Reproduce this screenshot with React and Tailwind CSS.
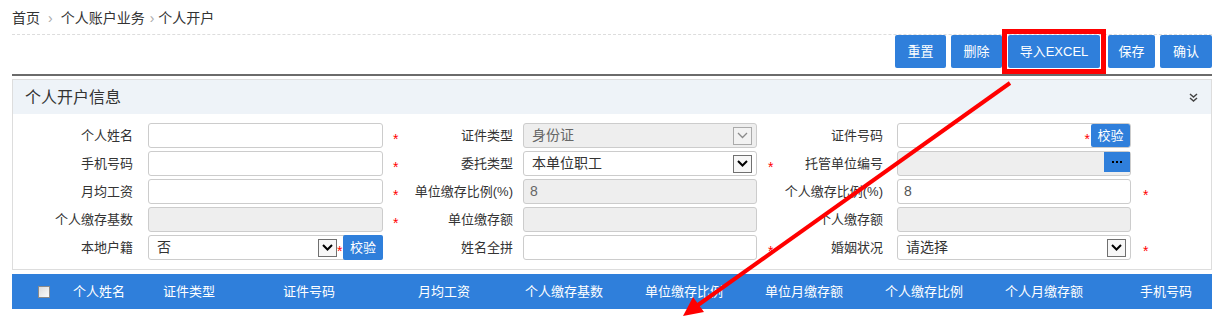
function Star({ className }) {
  return (
    <div className={`flex items-center ${className}`}>
      <span className="translate-y-[3px] text-[14px] leading-none text-[#ff0000]">*</span>
    </div>
  )
}

function Label({ children, className }) {
  return (
    <div className={`flex items-center justify-end whitespace-nowrap text-[13px] ${className}`}>
      {children}
    </div>
  )
}

function Box({ children, disabled, className = '' }) {
  return (
    <div
      className={`flex h-[25px] items-center rounded-[3px] border border-[#cccccc] text-[14px] ${
        disabled ? 'bg-[#eeeeee] text-[#666]' : 'bg-white text-[#333]'
      } ${className}`}
    >
      {children}
    </div>
  )
}

function Arrow({ disabled }) {
  return (
    <div
      className={`flex h-[18px] w-[19px] shrink-0 items-center justify-center border ${
        disabled ? 'border-[#aaaaaa] bg-[#f2f2f2]' : 'border-[#707070] bg-[#f7f7f7]'
      }`}
    >
      <svg width="11" height="7" viewBox="0 0 11 7">
        <polyline
          points="1,1 5.5,5.5 10,1"
          fill="none"
          stroke={disabled ? '#8a8a8a' : '#000'}
          strokeWidth={disabled ? 1.3 : 2}
        />
      </svg>
    </div>
  )
}

function Select({ value, disabled }) {
  return (
    <Box disabled={disabled} className="pl-[8px] pr-[4px]">
      <span className="flex-1">{value}</span>
      <Arrow disabled={disabled} />
    </Box>
  )
}

function BlueBtn({ children, className = '' }) {
  return (
    <div
      className={`flex items-center justify-center rounded-[2px] bg-[#2f7fdb] text-[13px] text-white ${className}`}
    >
      {children}
    </div>
  )
}

const columns = [
  ['个人姓名', 'w-[90px] justify-center'],
  ['证件类型', 'w-[90px] justify-center'],
  ['证件号码', 'w-[150px] justify-center'],
  ['月均工资', 'w-[120px] justify-center'],
  ['个人缴存基数', 'w-[120px] justify-center'],
  ['单位缴存比例', 'w-[120px] justify-center'],
  ['单位月缴存额', 'w-[120px] justify-center'],
  ['个人缴存比例', 'w-[120px] justify-center'],
  ['个人月缴存额', 'w-[120px] justify-center'],
  ['手机号码', 'flex-1 pl-[36px]'],
]

export default function App() {
  return (
    <div className="relative h-[320px] w-[1218px] overflow-hidden bg-white font-['Liberation_Sans','Noto_Sans_CJK_SC',sans-serif] text-[#333]">
      <div className="ml-[12px] w-[1200px]">
        {/* breadcrumb */}
        <div className="flex h-[35px] items-start border-b border-dashed border-[#dddddd] pt-[8px] text-[14px] leading-5">
          <span>首页</span>
          <span className="mx-[8px] text-[#aaa]">›</span>
          <span>个人账户业务</span>
          <span className="ml-[5px] mr-[4px] text-[#aaa]">›</span>
          <span>个人开户</span>
        </div>

        {/* toolbar */}
        <div className="flex h-[33px] justify-end">
          <BlueBtn className="w-[51px]">重置</BlueBtn>
          <BlueBtn className="ml-[5px] w-[51px]">删除</BlueBtn>
          <BlueBtn className="ml-[6px] w-[92px]">导入EXCEL</BlueBtn>
          <BlueBtn className="ml-[8px] w-[47px]">保存</BlueBtn>
          <BlueBtn className="ml-[5px] w-[52px]">确认</BlueBtn>
        </div>
        <div className="mt-[6px] h-[2px] bg-[#6b6b6b]" />

        {/* panel */}
        <div className="mt-[3px] border border-[#dddddd]">
          <div className="flex h-[34px] items-center justify-between bg-[#eef3f8] pl-[12px] pr-[13px]">
            <span className="translate-y-[1px] text-[16px]">个人开户信息</span>
            <svg width="9" height="9" viewBox="0 0 9 9">
              <polyline points="1,1 4.5,4 8,1" fill="none" stroke="#444" strokeWidth="1.5" />
              <polyline points="1,5 4.5,8 8,5" fill="none" stroke="#444" strokeWidth="1.5" />
            </svg>
          </div>

          <div className="grid grid-cols-[135px_235px_22px_118px_234px_23px_117px_234px_1fr] gap-y-[3px] pb-[9px] pt-[9px]">
            {/* row 1 */}
            <Label className="pr-[15px]">个人姓名</Label>
            <Box />
            <Star className="pl-[10px]" />
            <Label className="pr-[10px]">证件类型</Label>
            <Select value="身份证" disabled />
            <div />
            <Label className="pr-[14px]">证件号码</Label>
            <Box>
              <span className="flex-1" />
              <span className="mr-[1px] translate-y-[3px] text-[14px] leading-none text-[#ff0000]">*</span>
              <BlueBtn className="h-[23px] w-[39px]">校验</BlueBtn>
            </Box>
            <div />

            {/* row 2 */}
            <Label className="pr-[15px]">手机号码</Label>
            <Box />
            <Star className="pl-[10px]" />
            <Label className="pr-[10px]">委托类型</Label>
            <Select value="本单位职工" />
            <Star className="pl-[11px]" />
            <Label className="pr-[14px]">托管单位编号</Label>
            <Box disabled className="items-start">
              <span className="flex-1" />
              <div className="flex h-[20px] w-[26px] items-center justify-center gap-[2px] bg-[#2f7fdb]">
                <span className="h-[2px] w-[2px] bg-black" />
                <span className="h-[2px] w-[2px] bg-black" />
                <span className="h-[2px] w-[2px] bg-black" />
              </div>
            </Box>
            <div />

            {/* row 3 */}
            <Label className="pr-[15px]">月均工资</Label>
            <Box />
            <Star className="pl-[10px]" />
            <Label className="pr-[10px]">单位缴存比例(%)</Label>
            <Box disabled className="pl-[6px] text-[#555]">8</Box>
            <div />
            <Label className="pr-[14px]">个人缴存比例(%)</Label>
            <Box className="pl-[6px] text-[#555]">8</Box>
            <Star className="pl-[12px]" />

            {/* row 4 */}
            <Label className="pr-[15px]">个人缴存基数</Label>
            <Box disabled />
            <Star className="pl-[10px]" />
            <Label className="pr-[10px]">单位缴存额</Label>
            <Box disabled />
            <div />
            <Label className="pr-[14px]">个人缴存额</Label>
            <Box disabled />
            <div />

            {/* row 5 */}
            <Label className="pr-[15px]">本地户籍</Label>
            <Box className="pl-[8px]">
              <span className="flex-1">否</span>
              <Arrow />
              <span className="w-[6px] translate-y-[3px] text-[14px] leading-none text-[#ff0000]">*</span>
              <BlueBtn className="-my-px -mr-px h-[25px] w-[40px]">校验</BlueBtn>
            </Box>
            <div />
            <Label className="pr-[10px]">姓名全拼</Label>
            <Box />
            <Star className="pl-[11px]" />
            <Label className="pr-[14px]">婚姻状况</Label>
            <Select value="请选择" />
            <Star className="pl-[12px]" />
          </div>
        </div>

        {/* table header */}
        <div className="mt-[4px] flex h-[35px] items-center bg-[#2f7fdb] text-[13px] text-white">
          <div className="flex w-[42px] items-center pl-[26px]">
            <span className="h-[12px] w-[12px] border border-[#8a8a8a] bg-gradient-to-br from-[#dcdcdc] to-[#fbfbfb]" />
          </div>
          {columns.map(([name, cls]) => (
            <div key={name} className={`flex items-center whitespace-nowrap ${cls}`}>
              {name}
            </div>
          ))}
        </div>
      </div>

      {/* red annotation */}
      <svg className="pointer-events-none absolute left-0 top-0" width="1218" height="320">
        <rect x="1004.5" y="31.5" width="99" height="40" fill="none" stroke="#ff0000" strokeWidth="5" />
        <line x1="1010" y1="83" x2="698" y2="305" stroke="#ff0000" strokeWidth="4" />
        <polygon points="683,316 693,297 704,312" fill="#ff0000" />
      </svg>
    </div>
  )
}
